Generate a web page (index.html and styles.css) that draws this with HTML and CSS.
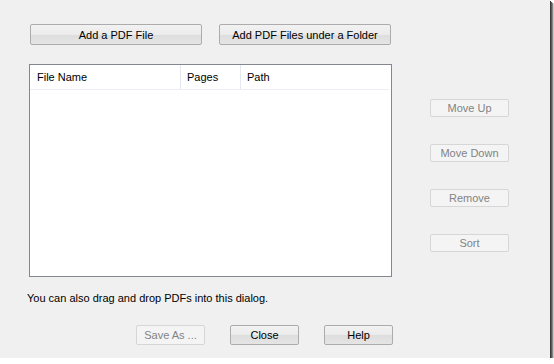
FILE: index.html
```html
<!DOCTYPE html>
<html lang="en">
<head>
    <meta charset="UTF-8">
    <title>Merge PDF Files</title>
    <link rel="stylesheet" href="styles.css">
</head>
<body>
    <div class="dialog">
        <div class="top-buttons">
            <button class="btn wide">Add a PDF File</button>
            <button class="btn wide">Add PDF Files under a Folder</button>
        </div>

        <div class="main">
            <div class="list">
                <div class="list-head">
                    <div class="col col-name">File Name</div>
                    <div class="col col-pages">Pages</div>
                    <div class="col col-path">Path</div>
                </div>
            </div>
            <div class="side">
                <button class="btn side-btn" disabled>Move Up</button>
                <button class="btn side-btn" disabled>Move Down</button>
                <button class="btn side-btn" disabled>Remove</button>
                <button class="btn side-btn" disabled>Sort</button>
            </div>
        </div>

        <p class="hint">You can also drag and drop PDFs into this dialog.</p>

        <div class="bottom-buttons">
            <button class="btn small" disabled>Save As ...</button>
            <button class="btn small">Close</button>
            <button class="btn small">Help</button>
        </div>
    </div>
</body>
</html>
```

FILE: styles.css
```css
body {
    margin: 0;
    background-color: #ffffff;
    font-family: "Liberation Sans", Arial, sans-serif;
    font-size: 11px;
    color: #000000;
}

.dialog {
    width: 520px;
    height: 334px;
    padding: 24px 0 0 30px;
    background-color: #f0f0f0;
    box-shadow: 1px 1px 0 #3a3a3a, 2px 2px 0 #5a5a5a, 3px 3px 1px #888888, 4px 4px 2px #bbbbbb;
}

.btn {
    font-family: inherit;
    font-size: 11px;
    color: #000000;
    border: 1px solid #acacac;
    border-radius: 2px;
    background: linear-gradient(#f2f2f2, #ebebeb 50%, #dddddd 51%, #e5e5e5);
    padding: 0;
    margin: 0;
}

.btn:disabled {
    color: #838383;
    border-color: #d6d6d6;
    background: #f4f4f4;
}

.top-buttons {
    display: flex;
    gap: 17px;
}

.wide {
    width: 172px;
    height: 21px;
}

.main {
    display: flex;
    margin-top: 19px;
    margin-left: -1px;
}

.list {
    width: 361px;
    height: 211px;
    border: 1px solid #828790;
    background-color: #ffffff;
}

.list-head {
    display: flex;
    height: 24px;
    margin-right: 2px;
    border-bottom: 1px solid #ebeff5;
}

.col {
    line-height: 24px;
    padding-left: 7px;
    box-sizing: border-box;
}

.col-name {
    width: 151px;
    border-right: 1px solid #e3e8f3;
}

.col-pages {
    width: 60px;
    padding-left: 6px;
    border-right: 1px solid #e3e8f3;
}

.col-path {
    flex: 1;
    padding-left: 6px;
}

.side {
    display: flex;
    flex-direction: column;
    gap: 27px;
    margin-left: 38px;
    padding-top: 35px;
}

.side-btn {
    width: 79px;
    height: 18px;
}

.hint {
    margin: 14px 0 0 -3px;
    line-height: 14px;
}

.bottom-buttons {
    display: flex;
    gap: 25px;
    margin: 20px 0 0 106px;
}

.small {
    width: 69px;
    height: 20px;
}
```
